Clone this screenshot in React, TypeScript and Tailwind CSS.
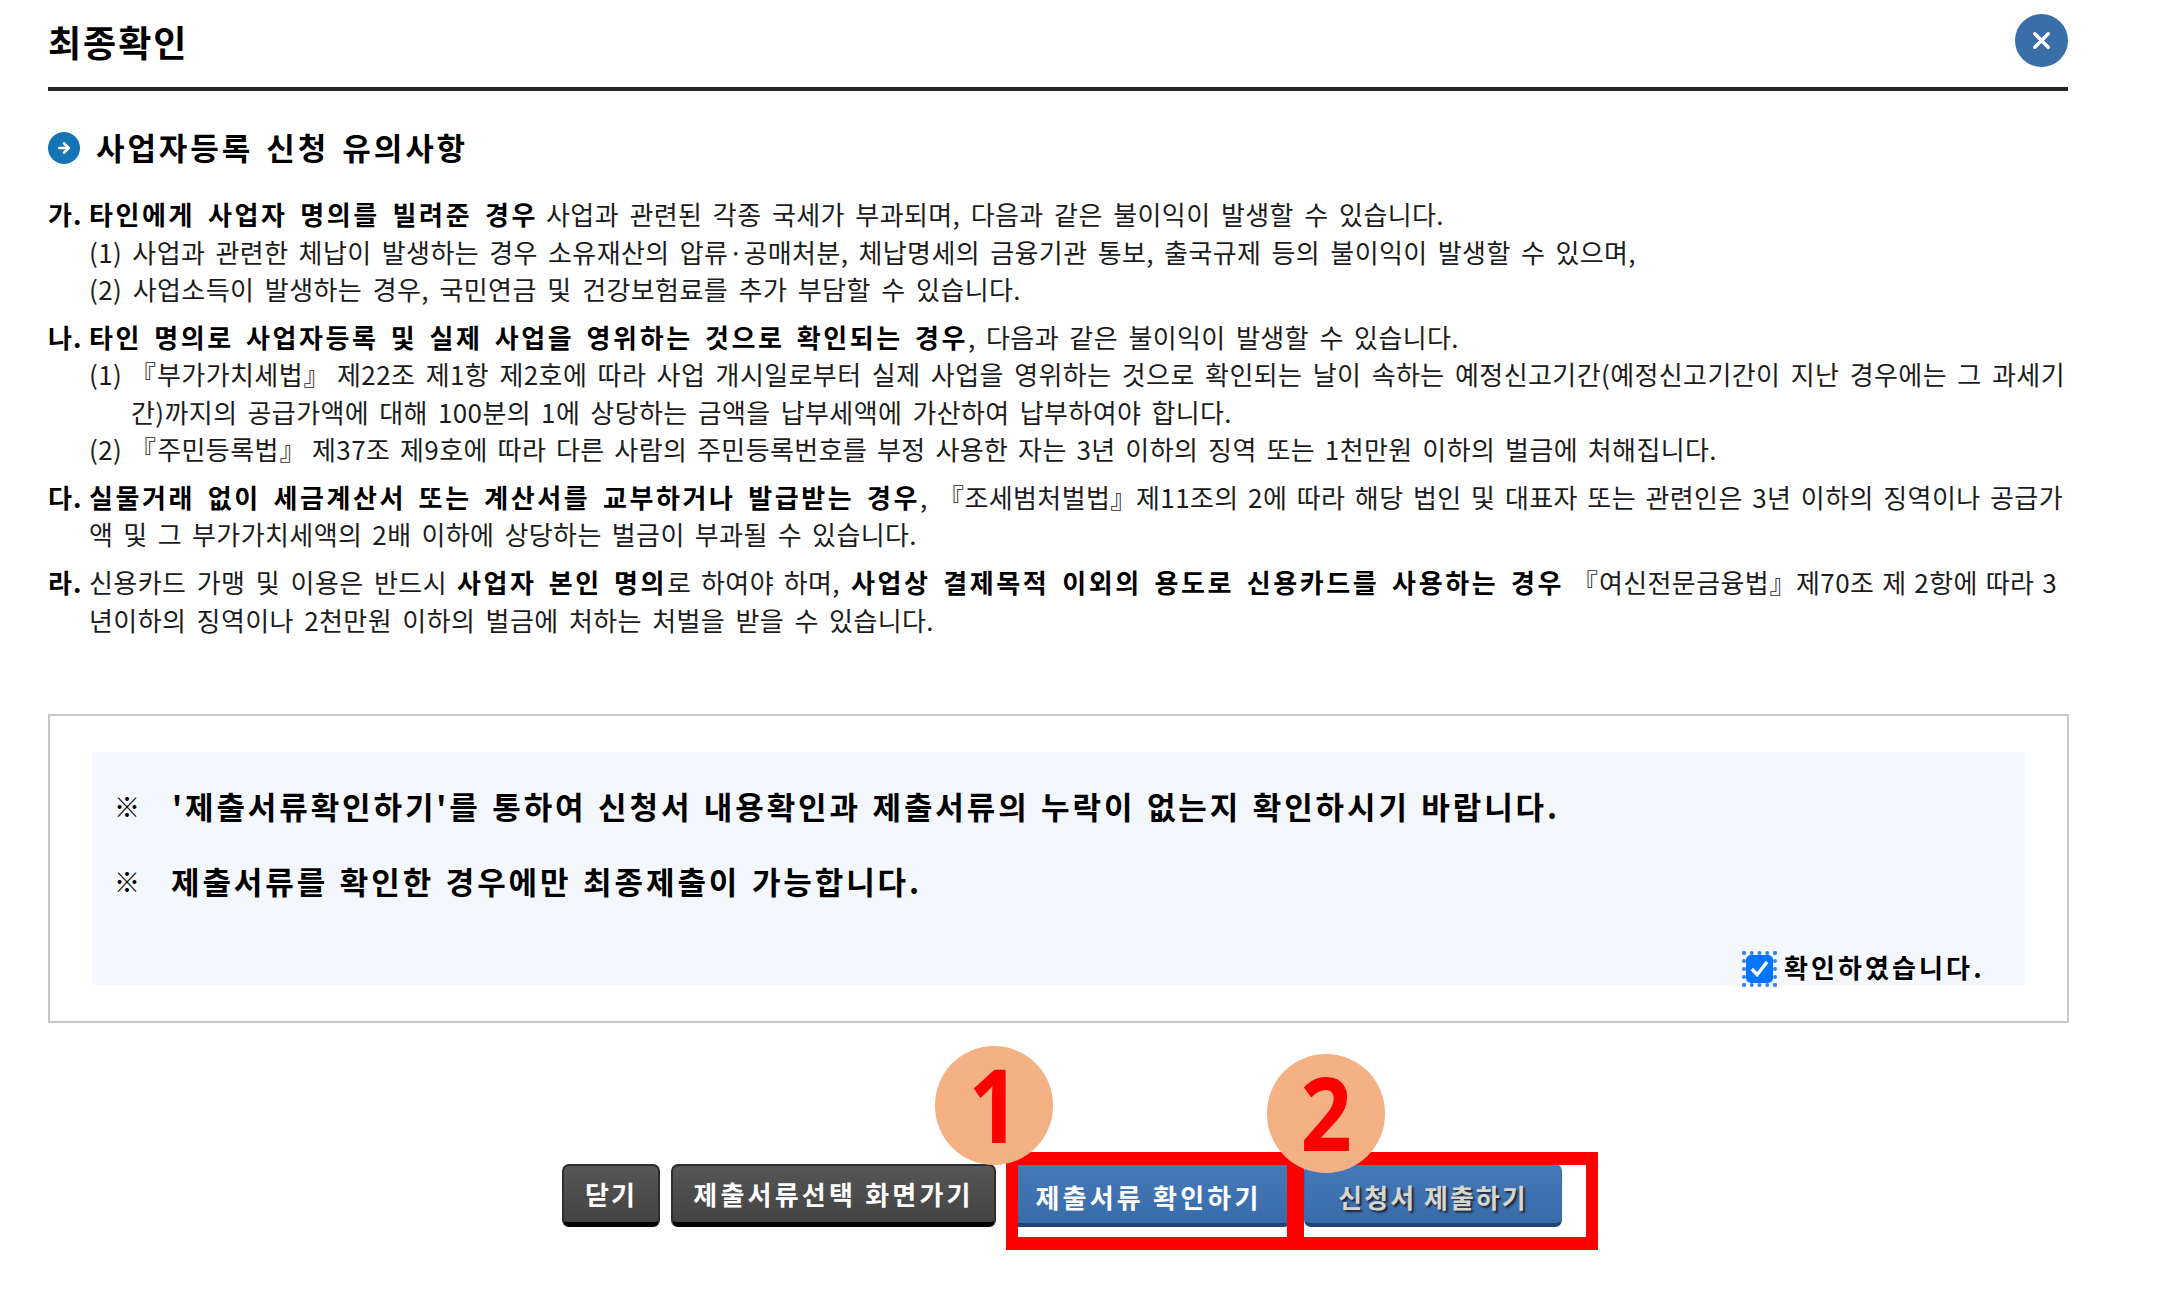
import React from "react";
import { X, ArrowRight } from "lucide-react";

type Segment = { text: string; className: string; bold?: boolean };
type Notice = { mark: string; lines: Segment[][] };

const notices: Notice[] = [
  {
    mark: "가.",
    lines: [
      [
        { text: "타인에게 사업자 명의를 빌려준 경우", className: "w-[449px]", bold: true },
        { text: "사업과 관련된 각종 국세가 부과되며, 다음과 같은 불이익이 발생할 수 있습니다.", className: "ml-[8px] w-[898px]" },
      ],
      [
        { text: "(1) 사업과 관련한 체납이 발생하는 경우 소유재산의 압류·공매처분, 체납명세의 금융기관 통보, 출국규제 등의 불이익이 발생할 수 있으며,", className: "w-[1547px]" },
      ],
      [
        { text: "(2) 사업소득이 발생하는 경우, 국민연금 및 건강보험료를 추가 부담할 수 있습니다.", className: "w-[932px]" },
      ],
    ],
  },
  {
    mark: "나.",
    lines: [
      [
        { text: "타인 명의로 사업자등록 및 실제 사업을 영위하는 것으로 확인되는 경우", className: "w-[879px]", bold: true },
        { text: ", 다음과 같은 불이익이 발생할 수 있습니다.", className: "w-[491px]" },
      ],
      [
        { text: "(1)", className: "w-[33px]" },
        { text: "『부가가치세법』", className: "ml-[8px] w-[200px]" },
        { text: "제22조 제1항 제2호에 따라 사업 개시일로부터 실제 사업을 영위하는 것으로 확인되는 날이 속하는 예정신고기간(예정신고기간이 지난 경우에는 그 과세기", className: "ml-[7px] w-[1728px]" },
      ],
      [
        { text: "간)까지의 공급가액에 대해 100분의 1에 상당하는 금액을 납부세액에 가산하여 납부하여야 합니다.", className: "ml-[42px] w-[1101px]" },
      ],
      [
        { text: "(2)", className: "w-[33px]" },
        { text: "『주민등록법』", className: "ml-[8px] w-[176px]" },
        { text: "제37조 제9호에 따라 다른 사람의 주민등록번호를 부정 사용한 자는 3년 이하의 징역 또는 1천만원 이하의 벌금에 처해집니다.", className: "ml-[6px] w-[1405px]" },
      ],
    ],
  },
  {
    mark: "다.",
    lines: [
      [
        { text: "실물거래 없이 세금계산서 또는 계산서를 교부하거나 발급받는 경우", className: "w-[831px]", bold: true },
        { text: ",", className: "w-[8px]" },
        { text: "『조세범처벌법』", className: "ml-[10px] w-[198px]" },
        { text: "제11조의 2에 따라 해당 법인 및 대표자 또는 관련인은 3년 이하의 징역이나 공급가", className: "w-[927px]" },
      ],
      [
        { text: "액 및 그 부가가치세액의 2배 이하에 상당하는 벌금이 부과될 수 있습니다.", className: "w-[828px]" },
      ],
    ],
  },
  {
    mark: "라.",
    lines: [
      [
        { text: "신용카드 가맹 및 이용은 반드시", className: "w-[358px]" },
        { text: "사업자 본인 명의", className: "ml-[10px] w-[210px]", bold: true },
        { text: "로 하여야 하며,", className: "w-[173px]" },
        { text: "사업상 결제목적 이외의 용도로 신용카드를 사용하는 경우", className: "ml-[11px] w-[713px]", bold: true },
        { text: "『여신전문금융법』", className: "ml-[8px] w-[224px]" },
        { text: "제70조 제 2항에 따라 3", className: "w-[261px]" },
      ],
      [
        { text: "년이하의 징역이나 2천만원 이하의 벌금에 처하는 처벌을 받을 수 있습니다.", className: "w-[845px]" },
      ],
    ],
  },
];

const NoticeLine = ({ segments }: { segments: Segment[] }) => (
  <p className="flex h-[37.4px] items-center leading-[37px]">
    {segments.map((s, i) => (
      <span
        key={i}
        className={`${s.className} shrink-0 whitespace-nowrap [text-align-last:justify] ${
          s.bold ? "font-bold tracking-[2.6px] text-black" : "tracking-[0.4px] text-[#1c1c1c]"
        }`}
      >
        {s.text}
      </span>
    ))}
  </p>
);

const StepBadge = ({ label, className }: { label: string; className: string }) => (
  <div
    className={`absolute flex h-[119px] w-[118px] items-center justify-center rounded-full bg-[#f4b183] font-['Open_Sans','Noto_Sans',sans-serif] text-[102px] leading-none font-bold text-[#ff0000] ${className}`}
  >
    <span className="-mt-[3px] scale-x-88">{label}</span>
  </div>
);

const darkButton =
  "flex h-[63px] items-center justify-center rounded-[7px] border-2 border-b-[5px] border-[#2e2e2e] border-b-black bg-linear-to-b from-[#565656] to-[#434343] pb-px text-white";
const blueButton =
  "flex h-[63px] items-center justify-center rounded-[7px] border border-b-[4px] border-[#3a6ba8] border-b-[#1f4674] bg-linear-to-b from-[#4679b9] to-[#386ba8] pt-[5px]";

const App = () => {
  return (
    <div className="relative h-[1291px] w-[2159px] overflow-hidden bg-white pr-[91px] pl-[48px] font-['Noto_Sans_CJK_KR',sans-serif] text-[26px] text-black">
      <header className="flex h-[91px] items-start justify-between border-b-4 border-[#262425]">
        <h1 className="pt-[14px] text-[36px] leading-[54px] font-bold tracking-[2px]">최종확인</h1>
        <button className="mt-[14px] flex size-[53px] items-center justify-center rounded-full bg-[#3a6ea9] text-white">
          <X size={27} strokeWidth={3} />
        </button>
      </header>

      <h2 className="mt-[32px] flex h-[48px] items-center text-[31px] font-bold">
        <span className="mt-px flex size-[32px] items-center justify-center rounded-full bg-[#1673b6] text-white">
          <ArrowRight size={16} strokeWidth={4} />
        </span>
        <span className="ml-[16px] w-[372px] whitespace-nowrap tracking-[2.9px] [text-align-last:justify]">
          사업자등록 신청 유의사항
        </span>
      </h2>

      <ul className="mt-[24px] flex flex-col gap-[10.5px]">
        {notices.map((n) => (
          <li key={n.mark} className="flex">
            <b className="w-[41px] shrink-0 leading-[37px] tracking-[1px]">{n.mark}</b>
            <div>
              {n.lines.map((line, i) => (
                <NoticeLine key={i} segments={line} />
              ))}
            </div>
          </li>
        ))}
      </ul>

      <section className="mt-[76px] h-[309px] w-[2021px] border-2 border-[#c8c8c8] px-[42px] pt-[36px]">
        <div className="flex h-[233px] flex-col bg-[#f4f7fc] pl-[22px] text-[31px] font-bold">
          <p className="mt-[35px] flex h-[38px] items-center">
            <span className="w-[58px] text-[26px]">※</span>
            <span className="w-[1388px] whitespace-nowrap tracking-[2.9px] [text-align-last:justify]">
              '제출서류확인하기'를 통하여 신청서 내용확인과 제출서류의 누락이 없는지 확인하시기 바랍니다.
            </span>
          </p>
          <p className="mt-[37px] flex h-[38px] items-center">
            <span className="w-[57px] text-[26px]">※</span>
            <span className="w-[751px] whitespace-nowrap tracking-[2.9px] [text-align-last:justify]">
              제출서류를 확인한 경우에만 최종제출이 가능합니다.
            </span>
          </p>
          <label className="mt-[51px] ml-[1628px] flex h-[36px] items-center text-[26px]">
            <span className="flex h-[36px] w-[35px] shrink-0 items-center justify-center border-4 border-dotted border-[#3b82f0]">
              <span className="flex h-[28px] w-[27px] shrink-0 items-center justify-center rounded-[5px] bg-[#0075ff]">
                <svg viewBox="0 0 20 20" className="size-[19px]" fill="none" stroke="white" strokeWidth="3.6">
                  <path d="M2 10.5 7.5 16.5 18 3" />
                </svg>
              </span>
            </span>
            <span className="-mt-[5px] ml-[7px] whitespace-nowrap tracking-[3.1px]">확인하였습니다.</span>
          </label>
        </div>
      </section>

      <div className="mt-[141px] ml-[514px] flex font-bold">
        <button className={`${darkButton} w-[98px] tracking-[2px]`}>닫기</button>
        <button className={`${darkButton} ml-[11px] w-[325px] tracking-[3.2px]`}>제출서류선택 화면가기</button>
        <button className={`${blueButton} ml-[10px] w-[285px] tracking-[3.2px] text-white`}>제출서류 확인하기</button>
        <button className={`${blueButton} ml-[13px] w-[258px] tracking-[2px] text-[#d6d6d0] [text-shadow:2px_2px_2px_#223]`}>
          신청서 제출하기
        </button>
      </div>

      {/* step markers over the submit buttons */}
      <div className="absolute top-[1152px] left-[1006px] h-[98px] w-[293px] border-x-12 border-y-[13px] border-[#ff0000]" />
      <div className="absolute top-[1152px] left-[1292px] h-[98px] w-[306px] border-x-12 border-y-[13px] border-[#ff0000]" />
      <StepBadge label="1" className="top-[1046px] left-[935px]" />
      <StepBadge label="2" className="top-[1054px] left-[1267px]" />
    </div>
  );
};

export default App;
